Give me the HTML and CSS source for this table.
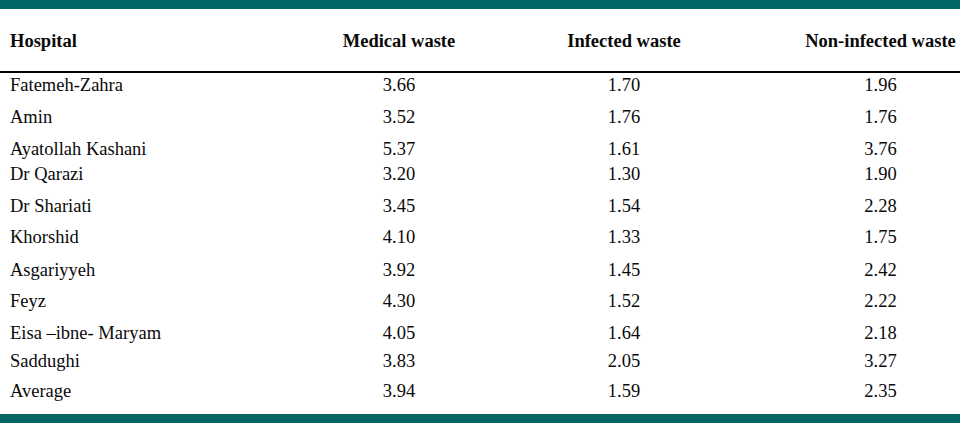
FILE: index.html
```html
<!DOCTYPE html>
<html>
<head>
<meta charset="utf-8">
<link rel="stylesheet" href="styles.css">
</head>
<body>
<div class="band"></div>
<table class="data">
  <colgroup>
    <col class="c1"><col class="c2"><col class="c3"><col class="c4">
  </colgroup>
  <thead>
    <tr>
      <th class="name">Hospital</th>
      <th>Medical waste</th>
      <th>Infected waste</th>
      <th class="last">Non-infected waste</th>
    </tr>
  </thead>
  <tbody>
    <tr class="r1"><td class="name">Fatemeh-Zahra</td><td>3.66</td><td>1.70</td><td class="last">1.96</td></tr>
    <tr class="r2"><td class="name">Amin</td><td>3.52</td><td>1.76</td><td class="last">1.76</td></tr>
    <tr class="r3"><td class="name">Ayatollah Kashani</td><td>5.37</td><td>1.61</td><td class="last">3.76</td></tr>
    <tr class="r4"><td class="name">Dr Qarazi</td><td>3.20</td><td>1.30</td><td class="last">1.90</td></tr>
    <tr class="r5"><td class="name">Dr Shariati</td><td>3.45</td><td>1.54</td><td class="last">2.28</td></tr>
    <tr class="r6"><td class="name">Khorshid</td><td>4.10</td><td>1.33</td><td class="last">1.75</td></tr>
    <tr class="r7"><td class="name">Asgariyyeh</td><td>3.92</td><td>1.45</td><td class="last">2.42</td></tr>
    <tr class="r8"><td class="name">Feyz</td><td>4.30</td><td>1.52</td><td class="last">2.22</td></tr>
    <tr class="r9"><td class="name">Eisa –ibne- Maryam</td><td>4.05</td><td>1.64</td><td class="last">2.18</td></tr>
    <tr class="r10"><td class="name">Saddughi</td><td>3.83</td><td>2.05</td><td class="last">3.27</td></tr>
    <tr class="r11"><td class="name">Average</td><td>3.94</td><td>1.59</td><td class="last">2.35</td></tr>
  </tbody>
</table>
<div class="band"></div>
</body>
</html>
```
FILE: styles.css
```css
html, body {
  margin: 0;
  padding: 0;
  background: #ffffff;
  overflow: hidden;
}
body {
  width: 960px;
  height: 423px;
  font-family: "Liberation Serif", "Times New Roman", serif;
  font-size: 18.5px;
  color: #0a0a0a;
}
.band {
  height: 9px;
  background: #006766;
}
.data {
  width: 960px;
  table-layout: fixed;
  border-collapse: collapse;
  border-spacing: 0;
  font-family: "Liberation Serif", "Times New Roman", serif;
}
.c1 { width: 287px; }
.c2 { width: 224px; }
.c3 { width: 226px; }
.c4 { width: 223px; }
.data th,
.data td {
  padding: 0;
  line-height: 20px;
  text-align: center;
  vertical-align: top;
  white-space: nowrap;
}
.data th {
  font-weight: bold;
  padding-top: 22px;
  padding-bottom: 20px;
  border-bottom: 2px solid #000;
}
.data .name {
  text-align: left;
  padding-left: 10px;
}
.data .last {
  padding-left: 64px;
}
.data td {
  padding-top: 0;
}
.r1 td { padding-top: 2px; height: 32px; }
.r2 td { height: 32px; }
.r3 td { height: 25px; }
.r4 td { height: 32px; }
.r5 td { height: 31px; }
.r6 td { height: 33px; }
.r7 td { height: 31px; }
.r8 td { height: 32px; }
.r9 td { height: 28px; }
.r10 td { height: 30px; }
.r11 td { height: 33px; }
```
